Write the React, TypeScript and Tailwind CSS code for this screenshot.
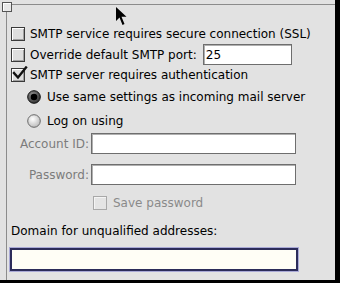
import React from "react";

const font = { fontFamily: '"DejaVu Sans", "Liberation Sans", sans-serif' };

function CheckBox({ checked = false, disabled = false }: { checked?: boolean; disabled?: boolean }) {
  return (
    <div className="relative w-[14px] h-[14px] shrink-0">
      <div
        className={
          disabled
            ? "w-[14px] h-[14px] border border-[#a8a8a8] bg-[#e4e4e4] shadow-[inset_1px_1px_0_#f4f4f4]"
            : "w-[14px] h-[14px] border border-[#3a3a3a] bg-[#dedede] shadow-[inset_1px_1px_0_#ffffff,inset_-1px_-1px_0_#a0a0a0]"
        }
      />
      {checked && (
        <svg className="absolute left-[1px] top-[-2px]" width="16" height="15" viewBox="0 0 16 15">
          <path d="M2 7 L6 11.5 L14 1.5" fill="none" stroke="#111" strokeWidth="2.4" strokeLinecap="square" />
        </svg>
      )}
    </div>
  );
}

function Radio({ selected = false }: { selected?: boolean }) {
  return (
    <svg width="14" height="14" viewBox="0 0 14 14" className="shrink-0">
      <defs>
        <radialGradient id="rg1" cx="0.4" cy="0.35" r="0.7">
          <stop offset="0" stopColor="#ffffff" />
          <stop offset="1" stopColor="#b8b8b8" />
        </radialGradient>
        <radialGradient id="rg2" cx="0.4" cy="0.35" r="0.7">
          <stop offset="0" stopColor="#9a9a9a" />
          <stop offset="1" stopColor="#2a2a2a" />
        </radialGradient>
      </defs>
      {selected ? (
        <>
          <circle cx="7" cy="7" r="6.3" fill="url(#rg2)" stroke="#111" strokeWidth="1" />
          <circle cx="7" cy="7" r="3.3" fill="#000" />
        </>
      ) : (
        <circle cx="7" cy="7" r="6.3" fill="url(#rg1)" stroke="#6a6a6a" strokeWidth="1" />
      )}
    </svg>
  );
}

function Field({ width, value = "" }: { width: number; value?: string }) {
  return (
    <div
      className="h-[21px] border border-[#6e6e6e] bg-white shadow-[inset_1px_1px_0_#b0b0b0] flex items-center px-[2px] text-[12px] text-black"
      style={{ width }}
    >
      {value}
    </div>
  );
}

export default function App() {
  return (
    <div className="w-[340px] h-[283px] bg-black overflow-hidden text-[12px] text-black" style={font}>
      <div className="relative w-[335px] h-[280px] bg-[#e2e2e2]">
        {/* close box */}
        <div className="absolute left-[2px] top-[2px] w-[10px] h-[10px] border border-[#555] bg-[#e8e8e8] shadow-[inset_1px_1px_0_#fff] z-10" />
        {/* cursor */}
        <svg className="absolute left-[115px] top-[6px] z-10" width="13" height="21" viewBox="0 0 13 21">
          <path d="M1 1 L1 15 L4.5 11.5 L7.5 19 L9.5 18 L6.5 10.8 L11.5 10.8 Z" fill="#000" />
        </svg>
        <div className="absolute left-[6px] top-[4px] right-0 bottom-0 border-l border-t border-[#8c8c8c]" />
        <div className="relative flex flex-col">
          <div className="mt-[24px] ml-[11px] h-[20px] flex items-center gap-[5px]">
            <CheckBox />
            <span>SMTP service requires secure connection (SSL)</span>
          </div>
          <div className="mt-[0px] ml-[11px] h-[21px] flex items-center gap-[5px]">
            <CheckBox />
            <span>Override default SMTP port:</span>
            <div className="ml-[1px]">
              <Field width={89} value="25" />
            </div>
          </div>
          <div className="mt-[0px] ml-[11px] h-[20px] flex items-center gap-[5px]">
            <CheckBox checked />
            <span>SMTP server requires authentication</span>
          </div>
          <div className="mt-[2px] ml-[27px] h-[20px] flex items-center gap-[6px]">
            <Radio selected />
            <span>Use same settings as incoming mail server</span>
          </div>
          <div className="mt-[4px] ml-[27px] h-[20px] flex items-center gap-[6px]">
            <Radio />
            <span>Log on using</span>
          </div>
          <div className="mt-[2px] h-[21px] flex items-center">
            <span className="w-[91px] text-right text-[#7c7c7c] pr-[2px]">Account ID:</span>
            <Field width={205} />
          </div>
          <div className="mt-[10px] h-[21px] flex items-center">
            <span className="w-[91px] text-right text-[#7c7c7c] pr-[2px]">Password:</span>
            <Field width={205} />
          </div>
          <div className="mt-[8px] ml-[93px] h-[20px] flex items-center gap-[6px]">
            <CheckBox disabled />
            <span className="text-[#8a8a8a]">Save password</span>
          </div>
          <div className="mt-[9px] ml-[11px] h-[18px] flex items-center">
            <span>Domain for unqualified addresses:</span>
          </div>
          <div className="mt-[8px] ml-[10px]">
            <div className="w-[288px] h-[23px] border-2 border-[#2c2c5a] bg-[#fffef6] shadow-[0_0_0_1px_#a9a9d6]" />
          </div>
        </div>
      </div>
    </div>
  );
}
